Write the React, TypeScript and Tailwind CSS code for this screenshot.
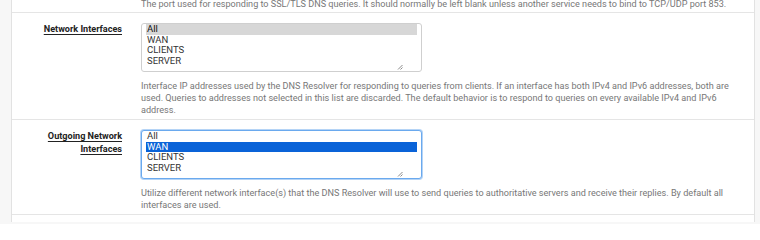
const fontStack = { fontFamily: 'Roboto, "Liberation Sans", sans-serif' }

interface ListBoxProps {
  options: string[]
  selected: string
  focused?: boolean
}

function ListBox({ options, selected, focused = false }: ListBoxProps) {
  return (
    <div
      className={
        focused
          ? 'relative h-[49px] w-[281px] rounded-[3px] border border-[#6aa9ee] bg-white px-[4px] text-[9.5px] shadow-[0_0_0_1px_#b5d4f6]'
          : 'relative h-[49px] w-[281px] rounded-[3px] border border-[#cfcfcf] bg-white px-[4px] text-[9.5px]'
      }
    >
      {options.map((opt) => {
        const isSel = opt === selected
        const cls = isSel
          ? focused
            ? 'h-[10.7px] bg-[#0a63d8] pl-[1px] leading-[10.7px] text-white'
            : 'h-[10.7px] bg-[#d7d7d7] pl-[1px] leading-[10.7px] text-[#111]'
          : 'h-[10.7px] pl-[1px] leading-[10.7px] text-[#333]'
        return (
          <div key={opt} className={cls}>
            {opt}
          </div>
        )
      })}
      <svg
        className="absolute bottom-[1px] right-[18px]"
        width="6"
        height="6"
        viewBox="0 0 6 6"
        aria-hidden
      >
        <path d="M5.5 1 L1 5.5 M5.5 3.5 L3.5 5.5" stroke="#8a8a8a" strokeWidth="1" />
      </svg>
    </div>
  )
}

interface FieldRowProps {
  label: string[]
  help: string
  focused?: boolean
  selected: string
}

function FieldRow({ label, help, focused, selected }: FieldRowProps) {
  return (
    <div className="flex border-t border-[#e5e5e5] pt-[10px] pb-[3px]">
      <div className="w-[110px] shrink-0 text-right text-[9.1px] font-bold leading-[13px] text-[#222]">
        {label.map((line) => (
          <div key={line}>
            <span className="underline underline-offset-[1.5px]">{line}</span>
          </div>
        ))}
      </div>
      <div className="ml-[19px] min-w-0 flex-1 pr-[9px]">
        <ListBox options={['All', 'WAN', 'CLIENTS', 'SERVER']} selected={selected} focused={focused} />
        <p className="mt-[8px] text-[9.1px] leading-[12px] text-[#777]">{help}</p>
      </div>
    </div>
  )
}

export default function App() {
  return (
    <div className="h-[224px] w-[760px] overflow-hidden bg-[#f7f7f7]" style={fontStack}>
      <div className="ml-[11px] h-full w-[744px] border-x border-[#e2e2e2] bg-white">
        <div className="-mt-[2px] flex pb-[2px]">
          <div className="ml-[129px] text-[9.1px] leading-[12px] text-[#777]">
            The port used for responding to SSL/TLS DNS queries. It should normally be left blank unless
            another service needs to bind to TCP/UDP port 853.
          </div>
        </div>
        <FieldRow
          label={['Network Interfaces']}
          selected="All"
          help="Interface IP addresses used by the DNS Resolver for responding to queries from clients. If an interface has both IPv4 and IPv6 addresses, both are used. Queries to addresses not selected in this list are discarded. The default behavior is to respond to queries on every available IPv4 and IPv6 address."
        />
        <FieldRow
          label={['Outgoing Network', 'Interfaces']}
          selected="WAN"
          focused
          help="Utilize different network interface(s) that the DNS Resolver will use to send queries to authoritative servers and receive their replies. By default all interfaces are used."
        />
        <div className="border-t border-[#e5e5e5]" />
      </div>
    </div>
  )
}
